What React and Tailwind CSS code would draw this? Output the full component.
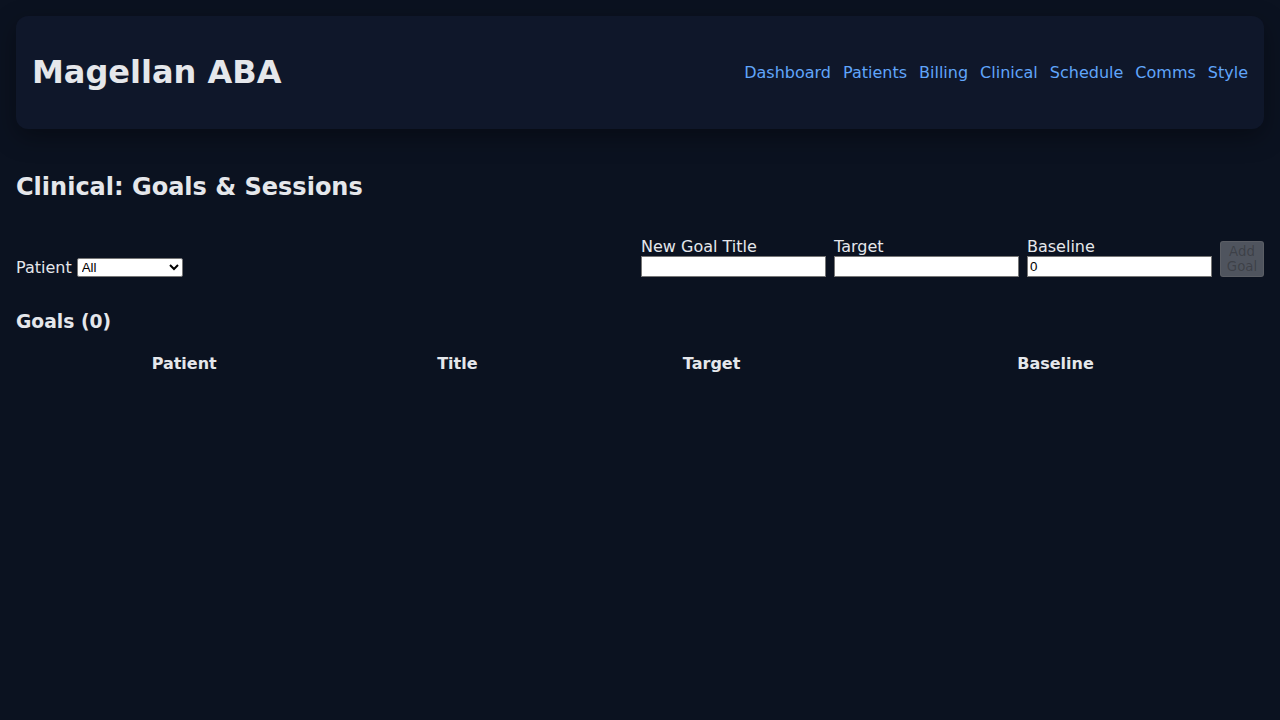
const font = { fontFamily: '"DejaVu Sans", sans-serif' };

export default function App() {
    const links = ['Dashboard', 'Patients', 'Billing', 'Clinical', 'Schedule', 'Comms', 'Style'];

    return (
        <div className="min-h-[720px] bg-[#0b1220] p-4 text-[#e5e7eb] text-base" style={font}>
            {/* Header */}
            <header className="flex items-center justify-between rounded-xl bg-[#0f172a] p-4 shadow-[0_8px_24px_rgba(0,0,0,0.35)]">
                <h1 className="my-[22px] text-[32px] font-bold leading-[37.25px]">Magellan ABA</h1>
                <nav className="flex gap-3">
                    {links.map((l) => (
                        <a key={l} href="#" className="text-[#60a5fa]">{l}</a>
                    ))}
                </nav>
            </header>

            <h2 className="mt-[44px] mb-0 text-2xl font-bold leading-[28px]">Clinical: Goals &amp; Sessions</h2>

            {/* Filters & new goal */}
            <div className="mt-[36px] flex items-end justify-between">
                <label className="flex items-center gap-[5px] leading-[19px]">
                    Patient
                    <select className="h-[19px] w-[106px] border border-[#767676] bg-white text-[13.33px] text-black rounded-[2px]" style={{ fontFamily: '"Liberation Sans", Arial, sans-serif', appearance: 'auto' }}>
                        <option>All</option>
                    </select>
                </label>
                <div className="flex items-end gap-2">
                    {[['New Goal Title', ''], ['Target', ''], ['Baseline', '0']].map(([label, val]) => (
                        <label key={label} className="flex flex-col leading-[19px]">
                            {label}
                            <input
                                defaultValue={val}
                                className="h-[21px] w-[185px] border border-[#767676] bg-white px-[2px] text-[13.33px] text-black"
                                style={{ fontFamily: '"Liberation Sans", Arial, sans-serif' }}
                            />
                        </label>
                    ))}
                    <button
                        disabled
                        className="h-[36px] w-[44px] rounded-[3px] border border-[rgba(118,118,118,0.3)] bg-[rgba(239,239,239,0.3)] text-[13.33px] leading-[15px] text-[rgba(16,16,16,0.3)]"
                    >
                        Add Goal
                    </button>
                </div>
            </div>

            <h3 className="mt-[34px] mb-[17.72px] text-[18.72px] font-bold leading-[22px]">Goals (0)</h3>

            <table className="w-full border-separate border-spacing-[2px]">
                <thead>
                    <tr>
                        {['Patient', 'Title', 'Target', 'Baseline', ''].map((h, i) => (
                            <th key={i} className="p-[1px] font-bold leading-[19px]">{h}</th>
                        ))}
                    </tr>
                </thead>
                <tbody></tbody>
            </table>
        </div>
    );
}
